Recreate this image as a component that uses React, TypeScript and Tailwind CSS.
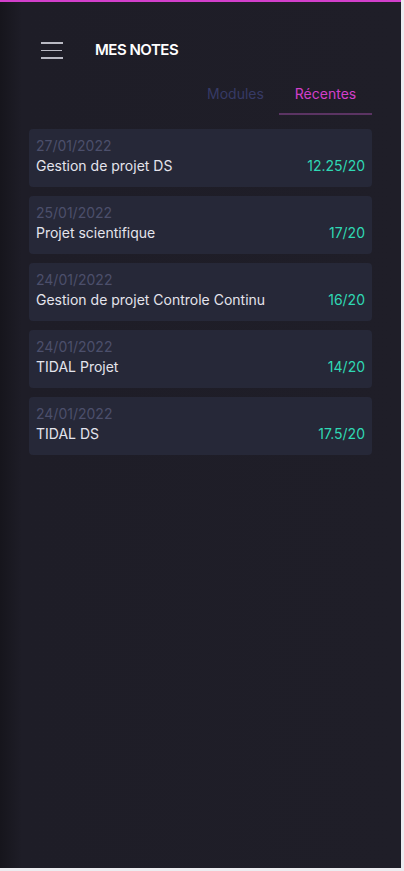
import React from "react";

const notes = [
  { date: "27/01/2022", title: "Gestion de projet DS", score: "12.25/20" },
  { date: "25/01/2022", title: "Projet scientifique", score: "17/20" },
  { date: "24/01/2022", title: "Gestion de projet Controle Continu", score: "16/20" },
  { date: "24/01/2022", title: "TIDAL Projet", score: "14/20" },
  { date: "24/01/2022", title: "TIDAL DS", score: "17.5/20" },
];

export default function App() {
  return (
    <div className="w-[404px] h-[871px] bg-[#ececf0]" style={{ fontFamily: "Inter, 'Noto Sans', sans-serif" }}>
      <div className="w-[401px] h-[868px] border-t-2 border-[#d23fcb] bg-[linear-gradient(to_right,#16151c,#1e1d27_22px,#1f1e28)] flex flex-col">
        <div className="flex items-center pl-[41px] pt-[37px]">
          <div className="flex flex-col gap-[6px] w-[22px]">
            <div className="h-[1.5px] bg-[#b9b9c3] w-[22px]" />
            <div className="h-[1.5px] bg-[#b9b9c3] w-[21px]" />
            <div className="h-[1.5px] bg-[#b9b9c3] w-[22px]" />
          </div>
          <div className="ml-[32px] text-[15px] font-semibold text-white tracking-[-0.5px]">MES NOTES</div>
        </div>
        <div className="flex justify-end pr-[29px] mt-[21px]">
          <div className="w-[87px] flex justify-center items-start text-[14px] text-[#363a65]">Modules</div>
          <div className="w-[93px] h-[32px] flex justify-center items-start text-[14px] text-[#d23fcb] border-b-2 border-[#5b3463]">Récentes</div>
        </div>
        <div className="flex flex-col gap-[9px] mx-[29px] mt-[14px] w-[343px]">
          {notes.map((n, i) => (
            <div key={i} className="h-[58px] rounded-[4px] bg-[#262838] pl-[7px] pr-[7px] pt-[8px]">
              <div className="text-[14px] leading-[18px] text-[#4c4f6b]">{n.date}</div>
              <div className="flex justify-between items-center mt-[2px]">
                <span className="text-[14px] leading-[18px] text-[#e4e4ec]">{n.title}</span>
                <span className="text-[14px] leading-[18px] text-[#2fd8b4]">{n.score}</span>
              </div>
            </div>
          ))}
        </div>
      </div>
    </div>
  );
}
